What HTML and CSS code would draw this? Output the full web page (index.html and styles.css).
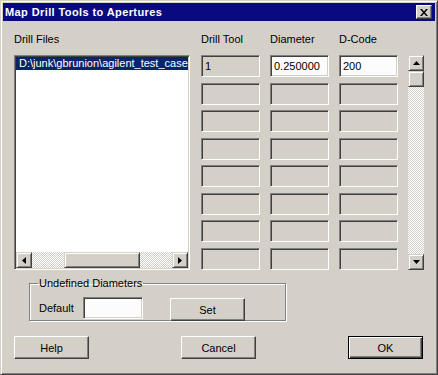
FILE: index.html
```html
<!DOCTYPE html>
<html lang="en">
<head>
  <meta charset="UTF-8">
  <title>Map Drill Tools to Apertures</title>
  <link rel="stylesheet" href="styles.css">
</head>
<body>
  <div class="window">
    <div class="titlebar">
      <span class="title">Map Drill Tools to Apertures</span>
      <button class="close-btn" aria-label="Close">
        <svg width="8" height="7" viewBox="0 0 8 7"><path d="M0 0h2l2 2.5L6 0h2L5 3.5 8 7H6L4 4.5 2 7H0l3-3.5z" fill="#000"/></svg>
      </button>
    </div>

    <div class="content">
      <div class="main">
        <div class="files">
          <div class="label">Drill Files</div>
          <div class="listbox">
            <div class="list-items">
              <div class="list-item selected">D:\junk\gbrunion\agilent_test_case</div>
            </div>
            <div class="hscroll">
              <div class="sb-btn"><svg width="4" height="7" viewBox="0 0 4 7"><path d="M4 0v7L0 3.5z" fill="#000"/></svg></div>
              <div class="track h-track"><div class="thumb h-thumb"></div></div>
              <div class="sb-btn"><svg width="4" height="7" viewBox="0 0 4 7"><path d="M0 0v7l4-3.5z" fill="#000"/></svg></div>
            </div>
          </div>
        </div>

        <div class="tools">
          <div class="tool-head">
            <div class="label">Drill Tool</div>
            <div class="label">Diameter</div>
            <div class="label">D-Code</div>
          </div>
          <div class="tool-grid" id="toolGrid"></div>
        </div>

        <div class="vscroll">
          <div class="sb-btn"><svg width="7" height="4" viewBox="0 0 7 4"><path d="M0 4h7L3.5 0z" fill="#000"/></svg></div>
          <div class="thumb v-thumb"></div>
          <div class="track v-track"></div>
          <div class="sb-btn"><svg width="7" height="4" viewBox="0 0 7 4"><path d="M0 0h7L3.5 4z" fill="#000"/></svg></div>
        </div>
      </div>

      <fieldset class="group">
        <legend>Undefined Diameters</legend>
        <div class="group-row">
          <span class="default-label">Default</span>
          <div class="field white"></div>
          <button class="btn set-btn">Set</button>
        </div>
      </fieldset>

      <div class="actions">
        <button class="btn">Help</button>
        <button class="btn">Cancel</button>
        <button class="btn default">OK</button>
      </div>
    </div>
  </div>

  <script>
    const tools = [
      { tool: "1", diameter: "0.250000", dcode: "200" }
    ];
    const grid = document.getElementById("toolGrid");

    for (let i = 0; i < 8; i++) {
      const t = tools[i];
      const cells = t ? [[t.tool, false], [t.diameter, true], [t.dcode, true]] : [["", false], ["", false], ["", false]];
      cells.forEach(([text, editable]) => {
        const div = document.createElement("div");
        div.className = editable ? "field white" : "field";
        div.textContent = text;
        grid.appendChild(div);
      });
    }
  </script>
</body>
</html>
```

FILE: styles.css
```css
body {
  margin: 0;
  background: #d4d0c8;
  font-family: "Liberation Sans", Arial, sans-serif;
  font-size: 11px;
  color: #000;
}

.window {
  width: 438px;
  height: 375px;
  box-sizing: border-box;
  border: 1px solid;
  border-color: #d4d0c8 #404040 #404040 #d4d0c8;
  box-shadow: inset 1px 1px #fff, inset -1px -1px #808080;
  padding: 2px;
  background: #d4d0c8;
}

.titlebar {
  height: 18px;
  background: #0a0a80;
  display: flex;
  align-items: center;
  justify-content: space-between;
  padding: 0 3px 0 2px;
}

.title {
  color: #fff;
  font-weight: bold;
  font-size: 11px;
  letter-spacing: 0.4px;
}

.close-btn {
  width: 16px;
  height: 14px;
  padding: 0;
  box-sizing: border-box;
  background: #d4d0c8;
  border: 1px solid;
  border-color: #fff #404040 #404040 #fff;
  box-shadow: inset -1px -1px #808080;
  display: flex;
  align-items: center;
  justify-content: center;
}

.content {
  padding: 12px 0 0 11px;
}

.label {
  line-height: 13px;
  height: 13px;
  margin-bottom: 9px;
}

.main {
  display: flex;
  align-items: flex-end;
  gap: 10px;
}

.files {
  width: 177px;
}

.listbox {
  width: 176px;
  height: 215px;
  box-sizing: border-box;
  border: 1px solid;
  border-color: #808080 #fff #fff #808080;
  box-shadow: inset 1px 1px #404040, inset -1px -1px #d4d0c8;
  padding: 1px;
  background: #fff;
  display: flex;
  flex-direction: column;
}

.list-items {
  flex: 1;
  overflow: hidden;
}

.list-item {
  height: 13px;
  line-height: 13px;
  padding-left: 3px;
  white-space: nowrap;
  overflow: hidden;
}

.selected {
  background: #0a246a;
  color: #fff;
}

.hscroll {
  height: 16px;
  display: flex;
}

.sb-btn {
  width: 16px;
  height: 16px;
  box-sizing: border-box;
  background: #d4d0c8;
  border: 1px solid;
  border-color: #d4d0c8 #404040 #404040 #d4d0c8;
  box-shadow: inset 1px 1px #fff, inset -1px -1px #808080;
  display: flex;
  align-items: center;
  justify-content: center;
  flex-shrink: 0;
}

.track {
  background: repeating-conic-gradient(#d4d0c8 0 25%, #fff 0 50%) 0 0 / 2px 2px;
}

.h-track {
  flex: 1;
}

.thumb {
  box-sizing: border-box;
  background: #d4d0c8;
  border: 1px solid;
  border-color: #d4d0c8 #404040 #404040 #d4d0c8;
  box-shadow: inset 1px 1px #fff, inset -1px -1px #808080;
}

.h-thumb {
  width: 76px;
  height: 16px;
  margin-left: 32px;
}

.tools {
  width: 197px;
}

.tool-head {
  display: grid;
  grid-template-columns: repeat(3, 59px);
  column-gap: 10px;
}

.tool-grid {
  display: grid;
  grid-template-columns: repeat(3, 59px);
  grid-template-rows: repeat(8, 22px);
  column-gap: 10px;
  height: 215px;
  align-content: space-between;
}

.field {
  height: 22px;
  box-sizing: border-box;
  border: 1px solid;
  border-color: #808080 #fff #fff #808080;
  box-shadow: inset 1px 1px #404040, inset -1px -1px #d4d0c8;
  background: #d4d0c8;
  line-height: 20px;
  padding-left: 3px;
  color: #000;
}

.field.white {
  background: #fcfcfc;
}

.vscroll {
  width: 16px;
  height: 215px;
  display: flex;
  flex-direction: column;
}

.v-thumb {
  height: 16px;
  flex-shrink: 0;
}

.v-track {
  flex: 1;
}

.group {
  margin: 7px 0 0 15px;
  width: 257px;
  height: 44px;
  box-sizing: border-box;
  padding: 0 9px;
  border: 1px solid #808080;
  box-shadow: inset 1px 1px #fff, 1px 1px #fff;
}

.group legend {
  padding: 0 1px;
  margin-left: -1px;
  line-height: 13px;
}

.group-row {
  display: flex;
  align-items: center;
  margin-top: 4px;
}

.default-label {
  width: 44px;
}

.group-row .field {
  width: 60px;
}

.btn {
  width: 75px;
  height: 23px;
  box-sizing: border-box;
  padding: 0;
  font-family: "Liberation Sans", Arial, sans-serif;
  font-size: 11px;
  color: #000;
  background: #d4d0c8;
  border: 1px solid;
  border-color: #fff #404040 #404040 #fff;
  box-shadow: inset -1px -1px #808080;
}

.set-btn {
  margin-left: 27px;
  margin-top: 4px;
}

.btn.default {
  border: 1px solid #000;
  box-shadow: inset 1px 1px #fff, inset -1px -1px #404040, inset -2px -2px #808080;
}

.actions {
  display: flex;
  justify-content: space-between;
  width: 409px;
  margin-top: 15px;
}
```
